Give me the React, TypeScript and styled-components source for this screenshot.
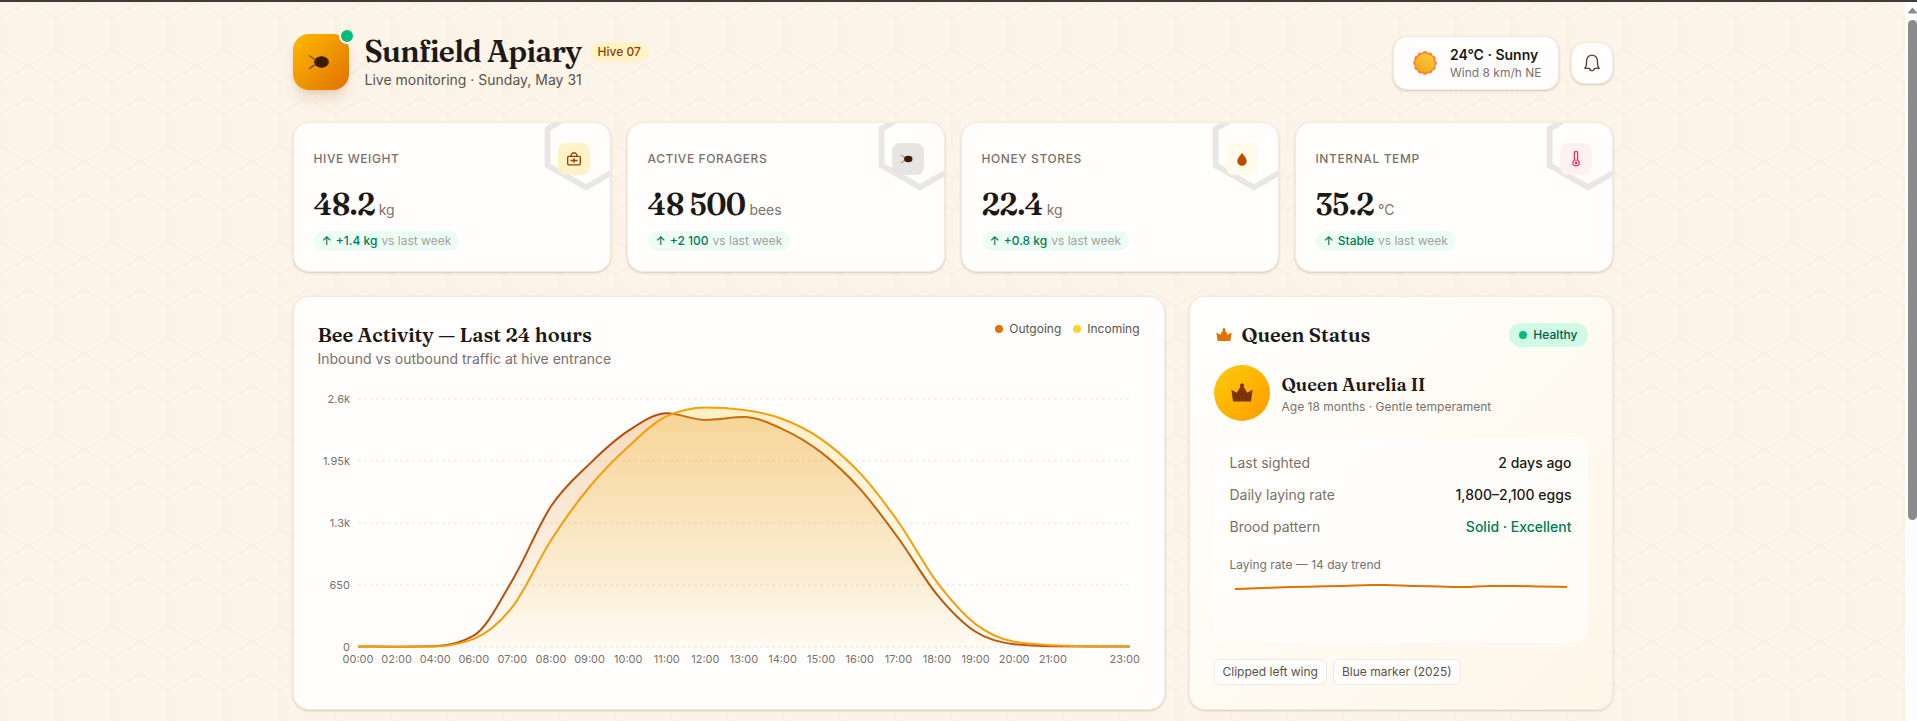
import React from "react";
import styled, { createGlobalStyle } from "styled-components";

const sans = `Inter, "Liberation Sans", sans-serif`;
const serif = `Fraunces, "Liberation Serif", serif`;

const honeycomb = encodeURIComponent(
  `<svg xmlns="http://www.w3.org/2000/svg" width="56" height="96"><path d="M28 0L56 16V48L28 64L0 48V16ZM28 64L56 80V96M28 64L0 80V96" fill="none" stroke="#f4ebdc" stroke-width="1"/></svg>`
);

const GlobalStyle = createGlobalStyle`
  *, *::before, *::after { box-sizing: border-box; }
  body {
    margin: 0;
    font-family: ${sans};
    color: #1c1917;
    background: #fcf4e8;
  }
  h1, h2, h3, p, dl, dd, ul { margin: 0; padding: 0; }
  ul { list-style: none; }
`;

const Shell = styled.div`
  display: flex;
  min-height: 100vh;
  border-top: 2px solid #3f3c3c;
`;

const Page = styled.main`
  flex: 1;
  min-width: 0;
  padding: 32px 24px 10px;
  background: #fcf4e8 url("data:image/svg+xml,${honeycomb}");
`;

const Container = styled.div`
  max-width: 1320px;
  margin: 0 auto;
  display: flex;
  flex-direction: column;
`;

const ScrollRail = styled.div`
  flex: none;
  width: 12px;
  padding: 5px 0 0 3px;
  display: flex;
  flex-direction: column;
  gap: 6px;
  background: #fcfcfc;
`;

const ScrollThumb = styled.div`
  height: 500px;
  border-radius: 5px;
  background: #8b8b8b;
`;

const Header = styled.header`
  display: flex;
  flex-wrap: wrap;
  align-items: center;
  justify-content: space-between;
  gap: 16px;
  margin-bottom: 32px;
`;

const Brand = styled.div`
  display: flex;
  align-items: center;
  gap: 16px;
`;

const Logo = styled.div`
  position: relative;
  display: grid;
  place-items: center;
  width: 56px;
  height: 56px;
  border-radius: 16px;
  background: linear-gradient(135deg, #ffb900, #e17100);
  box-shadow: 0 10px 15px -3px rgba(151, 60, 0, 0.16), 0 4px 6px -4px rgba(151, 60, 0, 0.2);
`;

const OnlineDot = styled.span`
  position: absolute;
  top: -6px;
  right: -6px;
  width: 16px;
  height: 16px;
  border: 2px solid #fcf4e8;
  border-radius: 50%;
  background: #00bc7d;
`;

const TitleRow = styled.div`
  display: flex;
  align-items: center;
  gap: 8px;
`;

const Title = styled.h1`
  font: 600 30px/36px ${serif};
  letter-spacing: -0.025em;
`;

const HiveTag = styled.span`
  padding: 2px 8px;
  border-radius: 10px;
  background: #fef3c6;
  color: #973c00;
  font-size: 12px;
  font-weight: 500;
  line-height: 16px;
`;

const Muted = styled.p<{ $dark?: boolean; $small?: boolean }>`
  color: ${(p) => (p.$dark ? "#57534d" : "#79716b")};
  font-size: ${(p) => (p.$small ? 12 : 14)}px;
  line-height: ${(p) => (p.$small ? 16 : 20)}px;
`;

const HeaderTools = styled.div`
  display: flex;
  align-items: center;
  gap: 12px;
  padding-top: 2px;
`;

const surface = `
  border: 1px solid #f1ebe1;
  background: #fffefc;
  box-shadow: 0 1px 3px rgba(68, 44, 20, 0.1), 0 1px 2px rgba(68, 44, 20, 0.1);
`;

const Weather = styled.div`
  ${surface}
  display: flex;
  align-items: center;
  gap: 12px;
  padding: 8px 16px;
  border-radius: 14px;
`;

const WeatherNow = styled.p`
  font-size: 14px;
  font-weight: 600;
  line-height: 20px;
`;

const IconButton = styled.button`
  ${surface}
  display: grid;
  place-items: center;
  width: 42px;
  height: 42px;
  padding: 0;
  border-radius: 14px;
  color: #44403b;
  cursor: pointer;
`;

const StatGrid = styled.section`
  display: grid;
  grid-template-columns: repeat(4, 1fr);
  gap: 16px;
  margin-bottom: 24px;
  @media (max-width: 1000px) {
    grid-template-columns: repeat(2, 1fr);
  }
`;

const StatCard = styled.article`
  ${surface}
  position: relative;
  overflow: hidden;
  padding: 20px;
  border-radius: 16px;
`;

const Watermark = styled.svg`
  position: absolute;
  top: -24px;
  right: -24px;
  width: 96px;
  height: 96px;
`;

const StatHead = styled.div`
  display: flex;
  align-items: center;
  justify-content: space-between;
  margin-bottom: 12px;
`;

const StatLabel = styled.h2`
  color: #79716b;
  font-size: 12px;
  font-weight: 500;
  line-height: 16px;
  letter-spacing: 0.05em;
  text-transform: uppercase;
`;

const IconTile = styled.span<{ $bg: string }>`
  position: relative;
  display: grid;
  place-items: center;
  width: 32px;
  height: 32px;
  border-radius: 8px;
  background: ${(p) => p.$bg};
`;

const StatValue = styled.p`
  display: flex;
  align-items: baseline;
  gap: 4px;
  height: 36px;
  margin-bottom: 8px;
  font: 600 30px/36px ${serif};
  letter-spacing: -0.025em;
`;

const Unit = styled.span`
  color: #79716b;
  font: 400 14px/20px ${sans};
  letter-spacing: normal;
`;

const Delta = styled.p`
  display: inline-flex;
  gap: 4px;
  padding: 2px 8px;
  border-radius: 10px;
  background: #ecfdf5;
  color: #007a55;
  font-size: 12px;
  font-weight: 500;
  line-height: 16px;
  vertical-align: top;
`;

const DeltaNote = styled.span`
  color: #a6a09b;
  font-weight: 400;
`;

const PanelGrid = styled.div`
  display: grid;
  grid-template-columns: repeat(3, 1fr);
  gap: 24px;
  @media (max-width: 1000px) {
    grid-template-columns: 1fr;
  }
`;

const Panel = styled.section<{ $wide?: boolean; $warm?: boolean }>`
  ${surface}
  padding: 24px;
  border-radius: 16px;
  ${(p) => p.$warm && "background: linear-gradient(135deg, #fffffe, #fefaf0 60%, #fef5e8);"}
  @media (min-width: 1001px) {
    grid-column: span ${(p) => (p.$wide ? 2 : 1)};
  }
`;

const PanelHead = styled.div<{ $middle?: boolean }>`
  display: flex;
  align-items: ${(p) => (p.$middle ? "center" : "flex-start")};
  justify-content: space-between;
  gap: 16px;
  margin-bottom: ${(p) => (p.$middle ? 16 : 20)}px;
`;

const PanelTitle = styled.h2`
  display: flex;
  align-items: center;
  gap: 8px;
  font: 600 20px/28px ${serif};
`;

const Legend = styled.ul`
  display: flex;
  gap: 12px;
  color: #57534d;
  font-size: 12px;
  line-height: 16px;
`;

const LegendItem = styled.li`
  display: flex;
  align-items: center;
  gap: 6px;
`;

const Dot = styled.span<{ $color: string }>`
  width: 8px;
  height: 8px;
  border-radius: 50%;
  background: ${(p) => p.$color};
`;

const ChartSvg = styled.svg`
  display: block;
  width: 100%;
  height: auto;
  overflow: visible;
  text {
    fill: #79716b;
    font: 11px ${sans};
  }
`;

const HealthPill = styled.span`
  display: flex;
  align-items: center;
  gap: 6px;
  padding: 4px 10px;
  border-radius: 12px;
  background: #d0fae5;
  color: #006045;
  font-size: 12px;
  font-weight: 500;
  line-height: 16px;
`;

const QueenRow = styled.div`
  display: flex;
  align-items: center;
  gap: 12px;
  margin-bottom: 16px;
`;

const Avatar = styled.span`
  display: grid;
  place-items: center;
  width: 56px;
  height: 56px;
  border-radius: 50%;
  background: linear-gradient(135deg, #fcc81c, #ffb900 40%, #ff9a00);
`;

const QueenName = styled.h3`
  font: 600 18px/28px ${serif};
`;

const Facts = styled.div`
  padding: 16px;
  margin-bottom: 16px;
  border-radius: 12px;
  background: rgba(255, 255, 255, 0.6);
`;

const FactList = styled.dl`
  display: flex;
  flex-direction: column;
  gap: 12px;
  margin-bottom: 20px;
`;

const Fact = styled.div<{ $good?: boolean }>`
  display: flex;
  justify-content: space-between;
  font-size: 14px;
  line-height: 20px;
  dt { color: #79716b; }
  dd {
    color: ${(p) => (p.$good ? "#007a55" : "#1c1917")};
    font-weight: 500;
  }
`;

const Spark = styled.svg`
  display: block;
  width: 100%;
  height: 50px;
  margin-top: 4px;
`;

const Chips = styled.ul`
  display: flex;
  gap: 6px;
`;

const Chip = styled.li`
  padding: 4px 8px;
  border: 1px solid #efe8e6;
  border-radius: 6px;
  background: #fffdfb;
  color: #57534d;
  font-size: 12px;
  line-height: 16px;
`;

/* ---------- icons ---------- */

const BeeIcon = ({ size }: { size: number }) => (
  <svg width={size} height={size} viewBox="0 0 28 28" aria-hidden="true">
    <ellipse cx="14.500" cy="14" rx="7.400" ry="5.700" fill="#432004" />
    <path d="M11 9.600v8.800M14.500 8.600v10.800M18 9.600v8.800" stroke="#331703" strokeWidth="1.400" />
    <path d="M1.800 7.600c2.300 0 3 3 6.500 3.800M1.800 20.600c2.300 0 3-3 6.500-3.800" fill="none" stroke="#7a4605" strokeWidth="1.300" />
  </svg>
);

const ScaleIcon = () => (
  <svg width="16" height="16" viewBox="0 0 16 16" fill="none" stroke="#973c00" strokeWidth="1.3" strokeLinejoin="round" aria-hidden="true">
    <rect x="1.700" y="5.300" width="12.600" height="8.500" rx="1" />
    <path d="M5.300 5.200V3.400L6.700 2h2.600l1.400 1.400v1.800M8 7.200v4.600M4.500 9.500h7" />
  </svg>
);

const DropIcon = () => (
  <svg width="16" height="16" viewBox="0 0 16 16" aria-hidden="true">
    <path d="M8 1.800C6.500 4.400 3.300 6.800 3.300 10.200a4.700 4.500 0 0 0 9.400 0C12.700 6.800 9.500 4.400 8 1.800Z" fill="#bb4d00" />
  </svg>
);

const ThermoIcon = () => (
  <svg width="16" height="16" viewBox="0 0 16 16" fill="none" stroke="#ff2056" strokeWidth="1.200" aria-hidden="true">
    <path d="M6.400 9.200V1.900a1.600 1.600 0 0 1 3.200 0v7.300a3.100 3.100 0 1 1-3.200 0Z" />
    <circle cx="8" cy="12" r="1.200" fill="#ff2056" stroke="none" />
    <path d="M8 8.500v3" strokeWidth="0.800" />
  </svg>
);

const CrownIcon = ({ size, color }: { size: number; color: string }) => (
  <svg width={size} height={size} viewBox="0 0 20 20" aria-hidden="true">
    <path d="M2.400 7.600 6.300 9.800 8.900 5.600a1.500 1.500 0 1 1 2.200 0L13.700 9.800 17.600 7.600 16.400 16H3.600Z" fill={color} />
  </svg>
);

const BellIcon = () => (
  <svg width="20" height="20" viewBox="0 0 20 20" fill="none" stroke="currentColor" strokeWidth="1.300" strokeLinejoin="round" aria-hidden="true">
    <path d="M2.800 15.300C4.200 14 4.600 12.500 4.600 9V7.600a5.400 5.400 0 0 1 10.800 0V9c0 3.500.4 5 1.800 6.300H12.400a2.400 2.400 0 0 1-4.800 0Z" />
  </svg>
);

const SunIcon = () => (
  <svg width="28" height="28" viewBox="0 0 28 28" aria-hidden="true">
    <defs>
      <linearGradient id="sun" x1="0.800" y1="0.100" x2="0.300" y2="1">
        <stop offset="0" stopColor="#fcc934" />
        <stop offset="1" stopColor="#f0a81e" />
      </linearGradient>
    </defs>
    <g fill="#fb8036">
      <circle cx="15" cy="14" r="10.800" />
      {Array.from({ length: 12 }, (_, i) => (
        <circle
          key={i}
          cx={15 + 9.6 * Math.cos((i * Math.PI) / 6)}
          cy={14 + 9.6 * Math.sin((i * Math.PI) / 6)}
          r="2.300"
        />
      ))}
    </g>
    <circle cx="15" cy="14" r="9.600" fill="url(#sun)" />
  </svg>
);

/* ---------- activity chart ---------- */

type Point = [number, number];

const hours = ["00", "02", "04", "06", "07", "08", "09", "10", "11", "12", "13", "14", "15", "16", "17", "18", "19", "20", "21", "22", "23"];
const outgoing = [5, 3, 8, 120, 700, 1475, 1920, 2265, 2450, 2380, 2410, 2285, 2040, 1660, 1140, 550, 160, 30, 8, 5, 5];
const incoming = [5, 3, 6, 85, 420, 1120, 1680, 2100, 2420, 2510, 2485, 2390, 2180, 1825, 1310, 680, 240, 55, 18, 8, 8];

const plot = { left: 40, right: 812, top: 10, bottom: 258, max: 2600 };
const xAt = (i: number) => plot.left + ((plot.right - plot.left) * i) / (hours.length - 1);
const yAt = (v: number) => plot.bottom - ((plot.bottom - plot.top) * v) / plot.max;

/* Monotone cubic interpolation through evenly spaced points. */
const smoothPath = (pts: Point[]) => {
  const n = pts.length;
  const slope = pts.slice(1).map((p, i) => (p[1] - pts[i][1]) / (p[0] - pts[i][0]));
  const tangent = pts.map((_, i) => {
    if (i === 0) return slope[0];
    if (i === n - 1) return slope[n - 2];
    const a = slope[i - 1];
    const b = slope[i];
    return (Math.sign(a) + Math.sign(b)) * Math.min(Math.abs(a), Math.abs(b), 0.25 * Math.abs(a + b));
  });
  return pts.slice(1).reduce((d, p, i) => {
    const q = pts[i];
    const h = (p[0] - q[0]) / 3;
    return `${d}C${q[0] + h},${q[1] + h * tangent[i]} ${p[0] - h},${p[1] - h * tangent[i + 1]} ${p[0]},${p[1]}`;
  }, `M${pts[0][0]},${pts[0][1]}`);
};

const Series = ({ id, values, stroke, fill }: { id: string; values: number[]; stroke: string; fill: string }) => {
  const line = smoothPath(values.map((v, i): Point => [xAt(i), yAt(v)]));
  return (
    <g>
      <linearGradient id={id} x1="0" y1="0" x2="0" y2="1">
        <stop offset="0" stopColor={fill} stopOpacity="0.260" />
        <stop offset="1" stopColor={fill} stopOpacity="0.020" />
      </linearGradient>
      <path d={`${line}V${plot.bottom}H${plot.left}Z`} fill={`url(#${id})`} />
      <path d={line} fill="none" stroke={stroke} strokeWidth="2" />
    </g>
  );
};

const ActivityChart = () => (
  <ChartSvg viewBox="0 0 822 288" role="img" aria-label="Bee traffic by hour">
    {[0, 650, 1300, 1950, 2600].map((v) => (
      <g key={v}>
        <line x1={plot.left} x2={plot.right} y1={yAt(v)} y2={yAt(v)} stroke="#e7e5e4" strokeDasharray="3 3" />
        <text x="32" y={yAt(v) + 4} textAnchor="end">
          {v > 1000 ? `${v / 1000}k` : v}
        </text>
      </g>
    ))}
    <Series id="out" values={outgoing} stroke="#b9500a" fill="#d97706" />
    <Series id="in" values={incoming} stroke="#f59e0b" fill="#fcc52a" />
    {hours.map((h, i) =>
      h === "22" ? null : (
        <text key={h} x={i === hours.length - 1 ? 822 : xAt(i)} y="274" textAnchor={i === hours.length - 1 ? "end" : "middle"}>
          {h}:00
        </text>
      )
    )}
  </ChartSvg>
);

const layingTrend: Point[] = [[5, 12], [32, 11], [60, 10], [87, 9.5], [114, 9], [141, 8], [155, 8], [182, 9], [209, 9.5], [234, 10], [260, 9], [285, 9], [310, 9.5], [337, 10]];

/* ---------- page ---------- */

const stats = [
  { label: "Hive weight", value: "48.2", unit: "kg", delta: "+1.4 kg", bg: "#fef3c6", icon: <ScaleIcon /> },
  { label: "Active foragers", value: "48 500", unit: "bees", delta: "+2 100", bg: "#e7e5e4", icon: <BeeIcon size={16} /> },
  { label: "Honey stores", value: "22.4", unit: "kg", delta: "+0.8 kg", bg: "#fffbeb", icon: <DropIcon /> },
  { label: "Internal temp", value: "35.2", unit: "°C", delta: "Stable", bg: "#fff1f2", icon: <ThermoIcon /> },
];

export default function App() {
  return (
    <>
      <GlobalStyle />
      <Shell>
        <Page>
          <Container>
            <Header>
              <Brand>
                <Logo>
                  <BeeIcon size={28} />
                  <OnlineDot />
                </Logo>
                <div>
                  <TitleRow>
                    <Title>Sunfield Apiary</Title>
                    <HiveTag>Hive 07</HiveTag>
                  </TitleRow>
                  <Muted $dark>Live monitoring · Sunday, May 31</Muted>
                </div>
              </Brand>
              <HeaderTools>
                <Weather>
                  <SunIcon />
                  <div>
                    <WeatherNow>24°C · Sunny</WeatherNow>
                    <Muted $small>Wind 8 km/h NE</Muted>
                  </div>
                </Weather>
                <IconButton type="button" aria-label="Notifications">
                  <BellIcon />
                </IconButton>
              </HeaderTools>
            </Header>

            <StatGrid>
              {stats.map((s) => (
                <StatCard key={s.label}>
                  <Watermark viewBox="0 0 100 100" aria-hidden="true">
                    <path d="M50 8 90 31V69L50 92 10 69V31Z" fill="none" stroke="#e8e7e6" strokeWidth="6" />
                  </Watermark>
                  <StatHead>
                    <StatLabel>{s.label}</StatLabel>
                    <IconTile $bg={s.bg}>{s.icon}</IconTile>
                  </StatHead>
                  <StatValue>
                    {s.value}
                    <Unit>{s.unit}</Unit>
                  </StatValue>
                  <Delta>
                    <span>↑</span>
                    <span>{s.delta}</span>
                    <DeltaNote>vs last week</DeltaNote>
                  </Delta>
                </StatCard>
              ))}
            </StatGrid>

            <PanelGrid>
              <Panel $wide>
                <PanelHead>
                  <div>
                    <PanelTitle>Bee Activity — Last 24 hours</PanelTitle>
                    <Muted>Inbound vs outbound traffic at hive entrance</Muted>
                  </div>
                  <Legend>
                    <LegendItem>
                      <Dot $color="#e17100" />
                      Outgoing
                    </LegendItem>
                    <LegendItem>
                      <Dot $color="#ffd230" />
                      Incoming
                    </LegendItem>
                  </Legend>
                </PanelHead>
                <ActivityChart />
              </Panel>

              <Panel $warm>
                <PanelHead $middle>
                  <PanelTitle>
                    <CrownIcon size={20} color="#e17100" />
                    Queen Status
                  </PanelTitle>
                  <HealthPill>
                    <Dot $color="#00bc7d" />
                    Healthy
                  </HealthPill>
                </PanelHead>
                <QueenRow>
                  <Avatar>
                    <CrownIcon size={28} color="#7b3306" />
                  </Avatar>
                  <div>
                    <QueenName>Queen Aurelia II</QueenName>
                    <Muted $small>Age 18 months · Gentle temperament</Muted>
                  </div>
                </QueenRow>
                <Facts>
                  <FactList>
                    <Fact>
                      <dt>Last sighted</dt>
                      <dd>2 days ago</dd>
                    </Fact>
                    <Fact>
                      <dt>Daily laying rate</dt>
                      <dd>1,800–2,100 eggs</dd>
                    </Fact>
                    <Fact $good>
                      <dt>Brood pattern</dt>
                      <dd>Solid · Excellent</dd>
                    </Fact>
                  </FactList>
                  <Muted $small>Laying rate — 14 day trend</Muted>
                  <Spark viewBox="0 0 342 50" preserveAspectRatio="none" role="img" aria-label="Laying rate trend">
                    <path d={smoothPath(layingTrend)} fill="none" stroke="#e17100" strokeWidth="2" />
                  </Spark>
                </Facts>
                <Chips>
                  <Chip>Clipped left wing</Chip>
                  <Chip>Blue marker (2025)</Chip>
                </Chips>
              </Panel>
            </PanelGrid>
          </Container>
        </Page>
        <ScrollRail aria-hidden="true">
          <svg width="9" height="7" viewBox="0 0 9 7">
            <path d="M4.500 0.500 8.700 5.200Q9 6.500 8 6.500H1Q0 6.500 0.300 5.200Z" fill="#8b8b8b" />
          </svg>
          <ScrollThumb />
        </ScrollRail>
      </Shell>
    </>
  );
}
